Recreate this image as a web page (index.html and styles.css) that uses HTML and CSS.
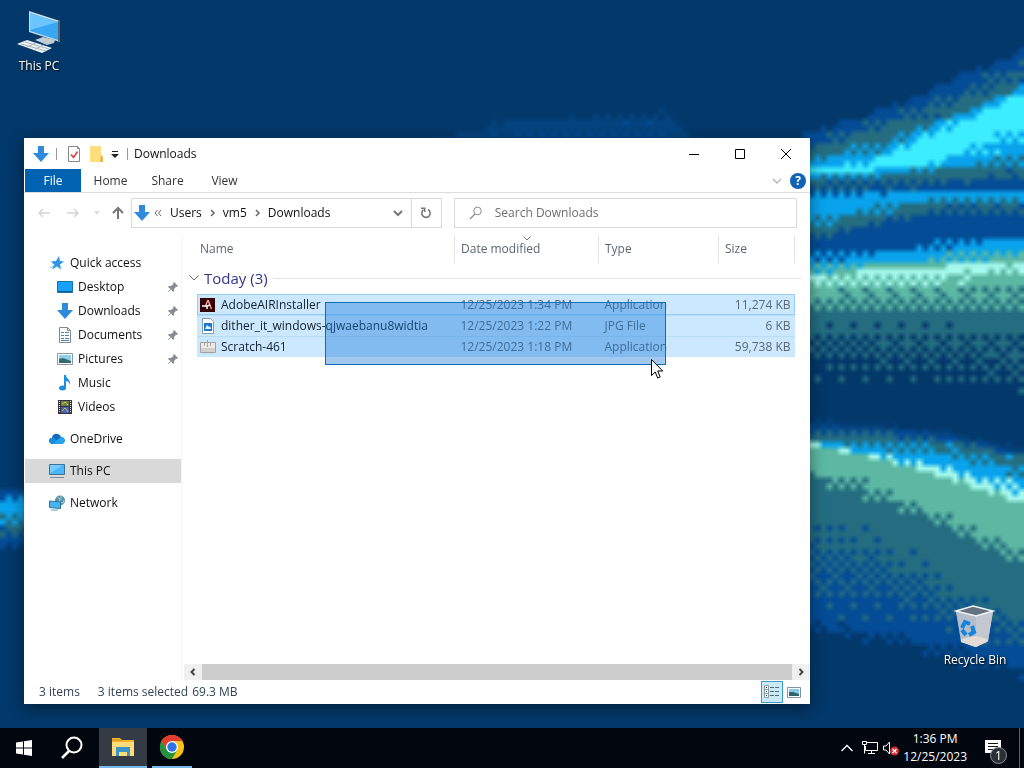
FILE: index.html
```html
<!DOCTYPE html>
<html lang="en">
<head>
    <meta charset="utf-8">
    <title>Downloads</title>
    <link rel="stylesheet" href="styles.css">
</head>
<body>
    <main class="desktop">
        <canvas id="wallpaper" class="wallpaper"></canvas>

        <button class="desktop-icon this-pc">
            <svg width="44" height="44" viewBox="0 0 44 44">
                <path d="M12 1L43 11V32L12 22Z" fill="#d5dde3"/>
                <path d="M13 3L41 12V30L13 21Z" fill="#38a8f5"/>
                <path d="M13 3L41 12L13 20Z" fill="#6cc5ff"/>
                <path d="M41 11l2 0v21l-2-1z" fill="#59636b"/>
                <path d="M18 30l8-3 12 3-1 3-7 2z" fill="#c3ccd3"/>
                <path d="M0 34l10-4 25 8-10 5z" fill="#eef2f4"/>
                <path d="M4 34l25 7M8 32l24 7M10 37l9-4M18 39l9-4" stroke="#aab4bc" stroke-width="1"/>
            </svg>
            <span>This PC</span>
        </button>

        <button class="desktop-icon recycle-bin">
            <svg width="44" height="44" viewBox="0 0 44 44">
                <path d="M3 7l17-5 20 5-5 30-13 6-13-5z" fill="#c9ced6"/>
                <path d="M3 7l20 5 17-5-5 30-12 6z" fill="#c3c7cf"/>
                <path d="M3 7l20 5v31L8 38z" fill="#b4bdc9"/>
                <path d="M3 7l17-5 20 5-17 5z" fill="#65727f" stroke="#f0f4f7" stroke-width="1.5"/>
                <path d="M8 35l14-3 13 3-1 3-11 5-15-5z" fill="#e3dad5"/>
                <g fill="none" stroke="#1683dd" stroke-width="4">
                    <path d="M9 24l3-6 5 2"/>
                    <path d="M19 22l2 6-5 3"/>
                    <path d="M13 31l-4-5"/>
                </g>
            </svg>
            <span>Recycle Bin</span>
        </button>

        <section class="window">
            <header class="titlebar">
                <svg class="title-icon" width="16" height="16" viewBox="0 0 16 16"><path d="M5 0h6v7h5l-8 9-8-9h5z" fill="#2f8ade"/></svg>
                <span class="separator"></span>
                <button class="quick-button" aria-label="Properties">
                    <svg width="14" height="16" viewBox="0 0 14 16">
                        <path d="M1.500.5h9l2 2v13h-11z" fill="#fff" stroke="#888"/>
                        <path d="M10.500.5v2h2" fill="none" stroke="#888"/>
                        <path d="M4 8.500l2.500 3 4-6" fill="none" stroke="#dc3c3c" stroke-width="1.500"/>
                    </svg>
                </button>
                <button class="quick-button" aria-label="New folder">
                    <svg width="14" height="16" viewBox="0 0 14 16">
                        <path d="M1 0h11v9l2 2v5H1z" fill="#ffdf7b"/>
                        <path d="M12 9l-1 7h3v-5z" fill="#e6b945"/>
                    </svg>
                </button>
                <button class="quick-button quick-more" aria-label="Customize toolbar">
                    <svg width="8" height="8" viewBox="0 0 8 8"><path d="M1 1.500h6" stroke="#222"/><path d="M0 4h8L4 8z" fill="#222"/></svg>
                </button>
                <span class="separator"></span>
                <h1 class="title">Downloads</h1>
                <div class="window-controls">
                    <button aria-label="Minimize"><svg width="12" height="12" viewBox="0 0 12 12"><path d="M1 6.500h10" stroke="#000"/></svg></button>
                    <button aria-label="Maximize"><svg width="12" height="12" viewBox="0 0 12 12"><path d="M1.500 1.500h9v9h-9z" fill="none" stroke="#000"/></svg></button>
                    <button aria-label="Close"><svg width="12" height="12" viewBox="0 0 12 12"><path d="M1 1l10 10M11 1L1 11" stroke="#000"/></svg></button>
                </div>
            </header>

            <div class="ribbon">
                <button class="tab file-tab">File</button>
                <button class="tab">Home</button>
                <button class="tab">Share</button>
                <button class="tab">View</button>
                <div class="ribbon-right">
                    <button aria-label="Expand ribbon"><svg width="10" height="10" viewBox="0 0 10 10"><path d="M1 3l4 4 4-4" fill="none" stroke="#b9b9b9" stroke-width="1.5"/></svg></button>
                    <button class="help" aria-label="Help">?</button>
                </div>
            </div>

            <div class="address-row">
                <button class="history" aria-label="Back"><svg width="14" height="14" viewBox="0 0 14 14"><path d="M13 7H2M6 3L2 7l4 4" fill="none" stroke="#d5d5d5" stroke-width="1.500"/></svg></button>
                <button class="history forward" aria-label="Forward"><svg width="14" height="14" viewBox="0 0 14 14"><path d="M1 7h11M8 3l4 4-4 4" fill="none" stroke="#d5d5d5" stroke-width="1.500"/></svg></button>
                <button class="history recent" aria-label="Recent locations"><svg width="6" height="6" viewBox="0 0 6 6"><path d="M0 1h6L3 5z" fill="#ddd"/></svg></button>
                <button class="history up" aria-label="Up"><svg width="14" height="14" viewBox="0 0 14 14"><path d="M7 13V2M2 7l5-5 5 5" fill="none" stroke="#777" stroke-width="2"/></svg></button>
                <div class="address">
                    <svg width="16" height="16" viewBox="0 0 16 16"><path d="M5 0h6v7h5l-8 9-8-9h5z" fill="#2f8ade"/></svg>
                    <svg width="8" height="8" viewBox="0 0 8 8"><path d="M3.500 1L1 4l2.500 3M7 1L4.500 4 7 7" fill="none" stroke="#666"/></svg>
                    <button class="crumb">Users</button>
                    <svg width="6" height="8" viewBox="0 0 6 8"><path d="M1 1l3 3-3 3" fill="none" stroke="#666" stroke-width="1.500"/></svg>
                    <button class="crumb">vm5</button>
                    <svg width="6" height="8" viewBox="0 0 6 8"><path d="M1 1l3 3-3 3" fill="none" stroke="#666" stroke-width="1.500"/></svg>
                    <button class="crumb">Downloads</button>
                    <button class="drop" aria-label="Previous locations"><svg width="10" height="10" viewBox="0 0 10 10"><path d="M1 3l4 4 4-4" fill="none" stroke="#777" stroke-width="2"/></svg></button>
                    <button class="refresh" aria-label="Refresh"><svg width="12" height="12" viewBox="0 0 12 12"><path d="M8 2.500A4.200 4.200 0 1 1 3.500 2.800" fill="none" stroke="#777" stroke-width="1.600"/><path d="M1 .5h4.500V5H4V2H1z" fill="#777"/></svg></button>
                </div>
                <label class="search">
                    <svg width="14" height="14" viewBox="0 0 14 14"><circle cx="8.500" cy="5" r="3.800" fill="none" stroke="#8a8a8a"/><path d="M6 8l-5 5" stroke="#8a8a8a" stroke-width="1.300"/></svg>
                    <input type="text" placeholder="Search Downloads" aria-label="Search Downloads">
                </label>
            </div>

            <div class="content">
                <nav class="sidebar">
                    <a class="nav-item" href="#quick">
                        <svg width="16" height="16" viewBox="0 0 16 16"><path d="M10 1l1 5 4 .5-4 3 1 5-4-3-5 3 2-5-3-3 5-.5z" fill="#2f96e8"/><path d="M1 13l5-3" stroke="#8cc9f5"/></svg>
                        Quick access
                    </a>
                    <a class="nav-item child" href="#desktop">
                        <svg width="16" height="16" viewBox="0 0 16 16"><path d="M.5 2.500h15v11H.5z" fill="#18a0fb" stroke="#1472ad"/><path d="M1 12.500h14" stroke="#0a5d9a"/></svg>
                        Desktop
                        <svg class="pin" width="10" height="10" viewBox="0 0 10 10"><path d="M6 0l4 4-1 1-1-.3L6 7v2L5 10 3 7.500.5 10 0 9.500 2.500 7 0 5l1-1h2l2.500-2L5 1z" fill="#858d92"/></svg>
                    </a>
                    <a class="nav-item child" href="#downloads">
                        <svg width="16" height="16" viewBox="0 0 16 16"><path d="M5 0h6v7h5l-8 9-8-9h5z" fill="#2f8ade"/></svg>
                        Downloads
                        <svg class="pin" width="10" height="10" viewBox="0 0 10 10"><path d="M6 0l4 4-1 1-1-.3L6 7v2L5 10 3 7.500.5 10 0 9.500 2.500 7 0 5l1-1h2l2.500-2L5 1z" fill="#858d92"/></svg>
                    </a>
                    <a class="nav-item child" href="#documents">
                        <svg width="16" height="16" viewBox="0 0 16 16"><path d="M2.500.5h8l3 3v12h-11z" fill="#fff" stroke="#7b8b96"/><path d="M10.500.5v3h3" fill="none" stroke="#7b8b96"/><path d="M4 5.500h3M4 8.500h3M4 11.500h3M8 5.500h4M8 8.500h4M8 11.500h4M4 13.500h8" stroke="#4484ae"/></svg>
                        Documents
                        <svg class="pin" width="10" height="10" viewBox="0 0 10 10"><path d="M6 0l4 4-1 1-1-.3L6 7v2L5 10 3 7.500.5 10 0 9.500 2.500 7 0 5l1-1h2l2.500-2L5 1z" fill="#858d92"/></svg>
                    </a>
                    <a class="nav-item child" href="#pictures">
                        <svg width="16" height="16" viewBox="0 0 16 16"><path d="M.5 2.500h15v11H.5z" fill="#fff" stroke="#8b9aa3"/><path d="M2 4h12v8H2z" fill="#8ed0ee"/><path d="M2 8l4-1 8 3v2H2z" fill="#356b70"/></svg>
                        Pictures
                        <svg class="pin" width="10" height="10" viewBox="0 0 10 10"><path d="M6 0l4 4-1 1-1-.3L6 7v2L5 10 3 7.500.5 10 0 9.500 2.500 7 0 5l1-1h2l2.500-2L5 1z" fill="#858d92"/></svg>
                    </a>
                    <a class="nav-item child" href="#music">
                        <svg width="16" height="16" viewBox="0 0 16 16"><ellipse cx="5.500" cy="13" rx="3.500" ry="2.500" fill="#1c8fe0"/><path d="M7 0h2c0 4 5 4 4 10-1-3-2-4-4-4v7H7z" fill="#1c8fe0"/></svg>
                        Music
                    </a>
                    <a class="nav-item child" href="#videos">
                        <svg width="16" height="16" viewBox="0 0 16 16"><path d="M1 1h14v14H1z" fill="#34333b"/><path d="M4 2h8v5H4z" fill="#6c7f4b"/><path d="M4 8h8v6H4z" fill="#4a5fb5"/><path d="M5 5l3-2 3 3M5 12l3-3 3 4" fill="none" stroke="#d3c948"/><path d="M2.500 2v12M13.500 2v12" stroke="#eee" stroke-dasharray="1 1"/></svg>
                        Videos
                    </a>
                    <a class="nav-item root" href="#onedrive">
                        <svg width="16" height="16" viewBox="0 0 16 16"><path d="M3 7c0-5 7-6 9-1 5 0 5 7 0 7H4C-1 13-1 7 3 7z" fill="#0f6cbd"/><path d="M5 7l7 6H4c-5 0-5-6-1-6z" fill="#1490df"/><path d="M8 9l4-3c5 0 5 7 0 7H5z" fill="#27a4ed"/></svg>
                        OneDrive
                    </a>
                    <a class="nav-item root current" href="#this-pc">
                        <svg width="16" height="16" viewBox="0 0 16 16"><path d="M.5 1.500h15v10H.5z" fill="#4bb7fa" stroke="#3f7194"/><path d="M1 2h13L1 10z" fill="#78cdff"/><path d="M1 14.500h14" stroke="#7b8d99"/></svg>
                        This PC
                    </a>
                    <a class="nav-item root" href="#network">
                        <svg width="16" height="16" viewBox="0 0 16 16"><circle cx="11" cy="5.500" r="5" fill="#588fa6"/><path d="M8 2l3 2-1 3 4 1 1-3M12 1v4" fill="none" stroke="#a6d3dc"/><path d="M.5 6l11 1v6.500l-11-1z" fill="#47b3f1" stroke="#2b769e"/><path d="M2 15h7" stroke="#6a9db8"/></svg>
                        Network
                    </a>
                </nav>

                <div class="file-pane">
                    <table class="files">
                        <colgroup>
                            <col>
                            <col class="col-date">
                            <col class="col-type">
                            <col class="col-size">
                        </colgroup>
                        <thead>
                            <tr>
                                <th class="name">Name</th>
                                <th class="sorted">Date modified<svg width="8" height="5" viewBox="0 0 8 5"><path d="M.5.5L4 4 7.500.5" fill="none" stroke="#777"/></svg></th>
                                <th>Type</th>
                                <th>Size</th>
                            </tr>
                        </thead>
                        <tbody>
                            <tr class="group">
                                <td colspan="4">
                                    <button class="group-toggle">
                                        <svg width="10" height="8" viewBox="0 0 10 8"><path d="M.5 1.500L5 6l4.500-4.500" fill="none" stroke="#666"/></svg>
                                        Today (3)
                                    </button>
                                </td>
                            </tr>
                            <tr class="file focused">
                                <td class="name"><div>
                                    <svg width="16" height="16" viewBox="0 0 16 16"><path d="M0 1h15v14H0z" fill="#350407"/><path d="M8 3l3.500 9M8 3L5.500 9" fill="none" stroke="#f09a9a" stroke-width="1.500"/><path d="M2 9h5v3M7 9l3-1" fill="none" stroke="#fff" stroke-width="1.500"/></svg>
                                    AdobeAIRInstaller
                                </div></td>
                                <td>12/25/2023 1:34 PM</td>
                                <td>Application</td>
                                <td class="size">11,274 KB</td>
                            </tr>
                            <tr class="file">
                                <td class="name"><div>
                                    <svg width="16" height="16" viewBox="0 0 16 16"><path d="M2.500.5h8l3 3v12h-11z" fill="#fff" stroke="#8a9aa5"/><path d="M4 5h8v8H4z" fill="#1d78c8"/><path d="M5 11l2-4 2 2 1-1 1 3z" fill="#e8f7ff"/></svg>
                                    dither_it_windows-qjwaebanu8widtia
                                </div></td>
                                <td>12/25/2023 1:22 PM</td>
                                <td>JPG File</td>
                                <td class="size">6 KB</td>
                            </tr>
                            <tr class="file">
                                <td class="name"><div>
                                    <svg width="16" height="16" viewBox="0 0 16 16"><path d="M.5 3.500h15v10H.5z" fill="#eee9e3" stroke="#a3a09d"/><path d="M7.500 1v7M4.500 3v4M10.500 3v4" stroke="#aaa5a1"/><path d="M1 9h14v4H1z" fill="#d5d0cb"/></svg>
                                    Scratch-461
                                </div></td>
                                <td>12/25/2023 1:18 PM</td>
                                <td>Application</td>
                                <td class="size">59,738 KB</td>
                            </tr>
                        </tbody>
                    </table>
                    <div class="marquee"></div>
                    <svg class="cursor" width="12" height="20" viewBox="0 0 12 20"><path d="M.5.5v16l3.700-3.500 2.500 6 2.500-1-2.500-6h5z" fill="#fff" stroke="#000"/></svg>
                    <div class="scrollbar">
                        <button aria-label="Scroll left"><svg width="8" height="8" viewBox="0 0 8 8"><path d="M5.500 1l-3 3 3 3" fill="none" stroke="#444" stroke-width="2"/></svg></button>
                        <div class="thumb"></div>
                        <button aria-label="Scroll right"><svg width="8" height="8" viewBox="0 0 8 8"><path d="M2.500 1l3 3-3 3" fill="none" stroke="#444" stroke-width="2"/></svg></button>
                    </div>
                </div>
            </div>

            <footer class="statusbar">
                <span class="count">3 items</span>
                <span class="selected">3 items selected</span>
                <span>69.3 MB</span>
                <div class="views">
                    <button class="active" aria-label="Details">
                        <svg width="16" height="14" viewBox="0 0 16 14"><path d="M.5.500h4v4h-4zM.5 4.500h4v4h-4zM.5 8.500h4v4h-4z" fill="#fff" stroke="#8a9aa3"/><path d="M2 2.500h1M2 6.500h1M2 10.500h1" stroke="#222"/><path d="M6 2.500h4M11 2.500h4M6 6.500h4M11 6.500h4M6 10.500h4M11 10.500h4" stroke="#536d78"/></svg>
                    </button>
                    <button aria-label="Large icons">
                        <svg width="14" height="11" viewBox="0 0 14 11"><path d="M.5.500h13v10H.5z" fill="#fff" stroke="#8194a6"/><path d="M2 2h10v7H2z" fill="#8bc9e8"/><path d="M2 5l4 0 6 2v2H2z" fill="#2d6570"/></svg>
                    </button>
                </div>
            </footer>
        </section>
    </main>

    <footer class="taskbar">
        <button class="task" aria-label="Start">
            <svg width="16" height="16" viewBox="0 0 16 16"><path d="M0 2.500l7-1v6H0zM8 1.300L16 0v7.500H8zM0 8.500h7v6l-7-1zM8 8.500h8V16l-8-1.300z" fill="#fff"/></svg>
        </button>
        <button class="task" aria-label="Search">
            <svg width="24" height="24" viewBox="0 0 24 24"><circle cx="14" cy="9" r="7.500" fill="none" stroke="#fff" stroke-width="2"/><path d="M9 15l-7 7" stroke="#fff" stroke-width="2.500"/></svg>
        </button>
        <button class="task running current" aria-label="File Explorer">
            <svg width="22" height="20" viewBox="0 0 22 20"><path d="M0 1h8l2 2h12v15H0z" fill="#efb52e"/><path d="M0 5h22v14H0z" fill="#ffdc75"/><path d="M4 10h14v9h-3v-4H7v4H4z" fill="#3994c9"/><path d="M0 3h10" stroke="#cc8e19"/></svg>
        </button>
        <button class="task running chrome" aria-label="Chrome">
            <svg width="24" height="24" viewBox="0 0 24 24">
                <circle cx="12" cy="12" r="12" fill="#fbc116"/>
                <path d="M1.600 6A12 12 0 0 1 22.400 6H12L6.800 15z" fill="#e33b2e"/>
                <path d="M1.600 6A12 12 0 0 0 12 24l5.200-9H6.800z" fill="#229342"/>
                <circle cx="12" cy="12" r="6" fill="#fff"/>
                <circle cx="12" cy="12" r="4.700" fill="#2b73e8"/>
            </svg>
        </button>
        <div class="tray">
            <button class="hidden-icons" aria-label="Show hidden icons"><svg width="12" height="8" viewBox="0 0 12 8"><path d="M.5 7L6 1.500 11.500 7" fill="none" stroke="#fff" stroke-width="1.300"/></svg></button>
            <button aria-label="Network"><svg width="18" height="16" viewBox="0 0 18 16"><path d="M5 2.500h11.500v8H4.500V6M7 13.500h7M10.500 11v2.500M1.500 1.500h4v3h-4zM3.500 5v8.500" fill="none" stroke="#fff"/></svg></button>
            <button aria-label="Volume muted"><svg width="18" height="16" viewBox="0 0 18 16"><path d="M1.500 6v4H4l3.500 4V2L4 6z" fill="none" stroke="#fff"/><circle cx="12.500" cy="11" r="4.500" fill="#d12a35"/><path d="M10.500 9l4 4M14.500 9l-4 4" stroke="#fff" stroke-width="1.300"/></svg></button>
            <button class="clock"><time>1:36 PM</time><time>12/25/2023</time></button>
            <button class="notifications" aria-label="Notifications">
                <svg width="18" height="16" viewBox="0 0 18 16"><path d="M1 0h16v13h-6l-3 3v-3H1z" fill="#fff"/><path d="M4 3.500h10M4 6.500h10M4 9.500h6" stroke="#10151b"/></svg>
                <span class="badge">1</span>
            </button>
            <span class="show-desktop"></span>
        </div>
    </footer>

    <script src="wallpaper.js"></script>
</body>
</html>
```
FILE: styles.css
```css
* {
    box-sizing: border-box;
}

body {
    margin: 0;
    height: 100vh;
    display: flex;
    flex-direction: column;
    overflow: hidden;
    font-family: "Open Sans", "Noto Sans", sans-serif;
    font-size: 12px;
    line-height: 16px;
    color: #111;
    background: #03386a;
}

button {
    display: flex;
    align-items: center;
    justify-content: center;
    padding: 0;
    border: none;
    background: none;
    font: inherit;
    color: inherit;
}

svg {
    flex: none;
}

.desktop {
    position: relative;
    flex: 1;
    min-height: 0;
}

.wallpaper {
    position: absolute;
    width: 100%;
    height: 100%;
}

.desktop-icon {
    position: absolute;
    width: 76px;
    flex-direction: column;
    gap: 4px;
    color: #fff;
    text-shadow: 1px 1px 2px #000;
}

.this-pc {
    left: 1px;
    top: 10px;
}

.recycle-bin {
    right: 11px;
    bottom: 60px;
}

/* explorer window */
.window {
    position: absolute;
    top: 138px;
    right: 214px;
    bottom: 24px;
    left: 24px;
    display: flex;
    flex-direction: column;
    background: #fff;
    box-shadow: 0 4px 14px rgba(0, 0, 0, 0.45);
}

.titlebar {
    display: flex;
    align-items: center;
    height: 31px;
    padding: 0 1px 0 9px;
}

.separator {
    width: 1px;
    height: 12px;
    margin-left: 7px;
    background: #999;
}

.quick-button {
    margin-left: 8px;
}

.separator + .quick-button {
    margin-left: 10px;
}

.quick-more + .separator {
    margin-left: 8px;
}

.title {
    margin: 0 0 0 6px;
    font-size: 12px;
    font-weight: normal;
}

.window-controls {
    display: flex;
    align-self: stretch;
    margin-left: auto;
}

.window-controls button {
    width: 46px;
}

.ribbon {
    display: flex;
    height: 24px;
    padding-left: 1px;
    border-bottom: 1px solid #dcdcdc;
    color: #333;
}

.tab {
    width: 57px;
}

.file-tab {
    width: 56px;
    margin-right: 1px;
    background: #0063b1;
    color: #fff;
}

.ribbon-right {
    display: flex;
    align-items: center;
    gap: 8px;
    margin-left: auto;
    padding-right: 4px;
}

.help {
    width: 16px;
    height: 16px;
    border-radius: 50%;
    background: #1062b4;
    color: #fff;
    font-weight: bold;
}

.address-row {
    display: flex;
    align-items: center;
    padding: 5px 13px 7px 7px;
}

.history {
    width: 26px;
    height: 30px;
}

.history.forward {
    width: 32px;
}

.history.recent {
    width: 16px;
}

.history.up {
    width: 26px;
}

.address {
    display: flex;
    align-items: center;
    flex: 15;
    height: 30px;
    gap: 8px;
    padding-left: 2px;
    border: 1px solid #d9d9d9;
}

.address > svg:nth-child(2) {
    margin-left: -4px;
}

.crumb + svg {
    margin-right: -1px;
}

.drop {
    margin-left: auto;
}

.refresh {
    align-self: stretch;
    width: 30px;
    border-left: 1px solid #d9d9d9;
}

.search {
    display: flex;
    align-items: center;
    flex: 16;
    height: 30px;
    gap: 12px;
    margin-left: 12px;
    padding-left: 14px;
    border: 1px solid #d9d9d9;
}

.search input {
    flex: 1;
    min-width: 0;
    padding: 0;
    border: none;
    outline: none;
    background: none;
    font: inherit;
}

.search input::placeholder {
    color: #6d6d6d;
}

.content {
    display: flex;
    flex: 1;
    min-height: 0;
}

.sidebar {
    width: 158px;
    padding: 16px 0 0 1px;
    border-right: 1px solid #f5f5f5;
}

.nav-item {
    display: flex;
    align-items: center;
    gap: 5px;
    height: 24px;
    padding: 0 3px 0 24px;
    color: #111;
    text-decoration: none;
}

.child {
    padding-left: 32px;
}

.root {
    margin-top: 8px;
}

.nav-item.current {
    background: #d9d9d9;
}

.pin {
    margin-left: auto;
}

.file-pane {
    position: relative;
    display: flex;
    flex-direction: column;
    flex: 1;
    min-width: 0;
}

.files {
    margin: 0 15px;
    table-layout: fixed;
    border-collapse: collapse;
    color: #596773;
}

.col-date {
    width: 144px;
}

.col-type {
    width: 120px;
}

.col-size {
    width: 76px;
}

.files th,
.files td {
    padding: 0 4px 0 6px;
    font-weight: normal;
    text-align: left;
    white-space: nowrap;
}

.files th {
    position: relative;
    height: 28px;
    border-right: 1px solid #e5e5e5;
}

.files th.name {
    padding-left: 3px;
}

.sorted svg {
    position: absolute;
    top: 1px;
    left: 50%;
    transform: translateX(-50%);
}

.files .group td {
    height: 31px;
    padding: 0;
}

.group-toggle {
    width: 100%;
    justify-content: flex-start;
    gap: 5px;
    margin-left: -8px;
    font-size: 15px;
    line-height: 20px;
    color: #34348c;
}

.group-toggle::after {
    content: "";
    flex: 1;
    height: 1px;
    margin-right: -14px;
    background: #e4e4e4;
}

.file {
    height: 21px;
    background: #cce8ff;
    border-top: 1px solid #b9dcf5;
}

.file.focused {
    outline: 1px solid #99cdf3;
    outline-offset: -1px;
}

.files td.name {
    padding-left: 3px;
    color: #10202c;
}

.name div {
    display: flex;
    align-items: center;
    gap: 5px;
}

.files td.size {
    text-align: right;
}

.marquee {
    position: absolute;
    top: 67px;
    left: 143px;
    width: 341px;
    height: 63px;
    border: 1px solid #0f6cbd;
    background: rgba(20, 120, 215, 0.4);
}

.cursor {
    position: absolute;
    top: 124px;
    left: 469px;
}

.scrollbar {
    display: flex;
    height: 16px;
    margin: auto 0 0 2px;
    background: #f0f0f0;
}

.scrollbar button {
    width: 18px;
}

.thumb {
    flex: 1;
    background: #cdcdcd;
}

.statusbar {
    display: flex;
    align-items: center;
    height: 24px;
    padding: 0 5px 0 15px;
    color: #33425a;
}

.count {
    margin-right: 18px;
}

.selected {
    margin-right: 4px;
}

.views {
    display: flex;
    margin-left: auto;
}

.views button {
    width: 22px;
    height: 22px;
}

.views .active {
    border: 1px solid #3c9cc4;
    background: #cbeaf7;
}

/* taskbar */
.taskbar {
    display: flex;
    height: 40px;
    background: #02060f;
    color: #fff;
}

.task {
    width: 48px;
}

.running {
    border-bottom: 2px solid #76b9ed;
}

.task.current {
    margin-left: 3px;
    background: #343b44;
}

.task.chrome {
    width: 40px;
    margin-left: 5px;
}

.tray {
    display: flex;
    gap: 3px;
    margin-left: auto;
}

.hidden-icons {
    margin-right: 5px;
}

.tray .clock {
    flex-direction: column;
    line-height: 18px;
}

.notifications {
    position: relative;
    width: 46px;
}

.badge {
    position: absolute;
    right: 9px;
    bottom: 4px;
    width: 17px;
    height: 17px;
    border: 1px solid #8a9199;
    border-radius: 50%;
    background: #2b3037;
    line-height: 15px;
}

.show-desktop {
    width: 5px;
    border-left: 1px solid #5b6068;
}
```
FILE: wallpaper.js
```js
// Coarse ordered dither of a few colour bands
const CELL = 6;
const W = 171;
const H = 122;

const COLORS = {
    N: '#03386a',
    S: '#04437d',
    B: '#044c96',
    O: '#246d80',
    C: '#08a3ec',
    K: '#3cecff',
    G: '#5cb8a2',
    P: '#a5f9ec'
};

const BAYER = [
    [0, 8, 2, 10],
    [12, 4, 14, 6],
    [3, 11, 1, 9],
    [15, 7, 13, 5]
];

// each column: [x, y of every colour stop]
const BANDS = [
    {
        stops: 'NBOCKKCOBCCOBBCGPGON',
        columns: [
            [800, 130, 138, 154, 164, 169, 170, 172, 178, 190, 198, 216, 234, 240, 248, 262, 274, 275, 290, 310, 380],
            [870, 108, 116, 136, 156, 163, 168, 170, 176, 188, 195, 200, 218, 228, 246, 258, 268, 269, 285, 312, 385],
            [940, 78, 86, 116, 122, 132, 155, 164, 172, 186, 194, 194, 200, 214, 238, 250, 264, 265, 285, 316, 390],
            [1030, 43, 50, 78, 82, 90, 112, 146, 166, 182, 192, 192, 202, 216, 230, 240, 256, 262, 276, 320, 400]
        ]
    },
    {
        stops: 'NSBOCPGGOOBN',
        columns: [
            [800, 418, 422, 426, 438, 440, 441, 443, 462, 480, 500, 620, 640],
            [880, 422, 426, 430, 438, 452, 458, 460, 482, 506, 525, 625, 645],
            [950, 430, 434, 438, 442, 462, 476, 480, 512, 536, 570, 640, 665],
            [1030, 448, 452, 456, 460, 486, 502, 510, 550, 578, 615, 660, 690]
        ]
    },
    {
        stops: 'NSBSN',
        columns: [
            [430, 136, 138, 145, 150, 160],
            [510, 114, 122, 170, 175, 180],
            [660, 106, 116, 170, 175, 180],
            [690, 128, 136, 150, 155, 160]
        ]
    },
    {
        stops: 'NBCCOBN',
        columns: [
            [0, 484, 492, 502, 512, 526, 540, 552],
            [40, 484, 490, 500, 512, 526, 540, 552]
        ]
    }
];

function stopAt(band, x, i) {
    const cols = band.columns;
    for (let c = 0; c < cols.length - 1; c++) {
        const a = cols[c];
        const b = cols[c + 1];
        if (x >= a[0] && x <= b[0]) {
            return a[i + 1] + (b[i + 1] - a[i + 1]) * (x - a[0]) / (b[0] - a[0]);
        }
    }
    return null;
}

const canvas = document.getElementById('wallpaper');
canvas.width = W;
canvas.height = H;
const ctx = canvas.getContext('2d');
ctx.fillStyle = COLORS.N;
ctx.fillRect(0, 0, W, H);

for (let gy = 0; gy < H; gy++) {
    for (let gx = 0; gx < W; gx++) {
        const x = gx * CELL;
        const y = gy * CELL;
        const limit = (BAYER[gy % 4][gx % 4] + 0.5) / 16;
        for (const band of BANDS) {
            for (let i = 0; i < band.stops.length - 1; i++) {
                const top = stopAt(band, x, i);
                const bottom = stopAt(band, x, i + 1);
                if (top === null || y < top || y >= bottom) continue;
                const t = (y - top) / (bottom - top);
                ctx.fillStyle = COLORS[band.stops[t > limit ? i + 1 : i]];
                ctx.fillRect(gx, gy, 1, 1);
            }
        }
    }
}
```
